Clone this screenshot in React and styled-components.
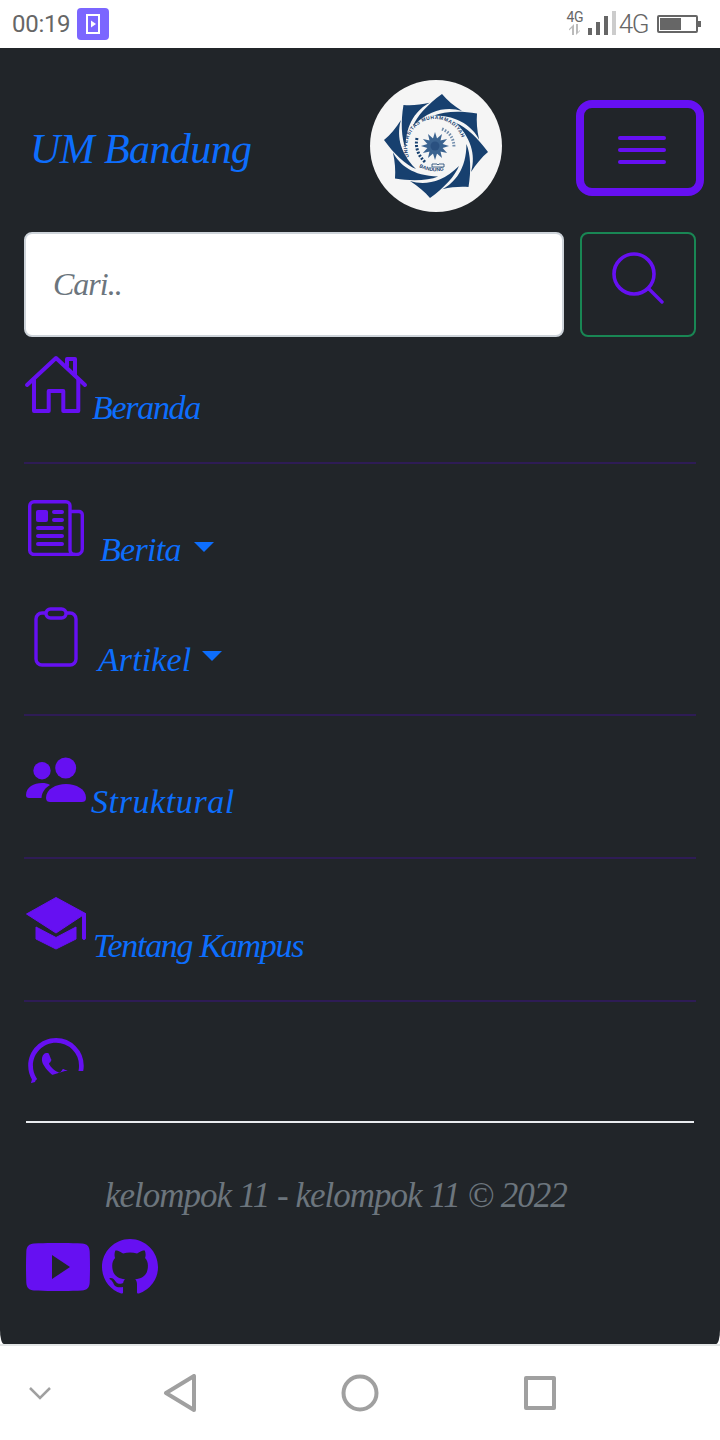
import styled, { createGlobalStyle } from "styled-components";
import { BsWhatsapp, BsGithub } from "react-icons/bs";

const GlobalStyle = createGlobalStyle`
  html, body { margin: 0; padding: 0; background: #fff; }
  * { box-sizing: border-box; }
`;

const script = `"Liberation Serif", "DejaVu Serif", serif`;
const purple = "#6610f2";
const blue = "#0d6efd";

const Screen = styled.div`
  width: 720px;
  height: 1440px;
  display: flex;
  flex-direction: column;
  overflow: hidden;
  background: #fff;
`;

/* status bar */
const StatusBar = styled.div`
  height: 48px;
  flex: none;
  display: flex;
  align-items: center;
  padding: 0 19px 0 12px;
  font-family: Roboto, sans-serif;
  color: #666;
`;
const Time = styled.span`
  font-size: 24px;
  letter-spacing: -0.3px;
`;
const AppBadge = styled.div`
  width: 32px;
  height: 32px;
  margin-left: 7px;
  border-radius: 4px;
  background: #7b66ff;
  display: flex;
  align-items: center;
  justify-content: center;
`;
const StatusRight = styled.div`
  margin-left: auto;
  display: flex;
  align-items: center;
`;
const SimStack = styled.div`
  width: 18px;
  display: flex;
  flex-direction: column;
  align-items: center;
  font-size: 14px;
  line-height: 13px;
  letter-spacing: -0.5px;
  margin-top: -2px;
`;
const BigG = styled.span`
  font-size: 26px;
  line-height: 26px;
  font-weight: 300;
  letter-spacing: -1.5px;
  margin: 0 9px 0 2px;
`;

/* main panel */
const Main = styled.main`
  flex: none;
  height: 1296px;
  background: #212529;
  border-radius: 0 0 4px 4px / 0 0 14px 14px;
  padding-top: 32px;
  font-family: ${script};
  font-style: italic;
`;
const Header = styled.header`
  display: flex;
  align-items: center;
  justify-content: space-between;
  padding: 0 16px 0 30px;
`;
const Brand = styled.a`
  color: ${blue};
  font-size: 42px;
  letter-spacing: -0.6px;
  line-height: 54px;
  width: 340px;
  margin-top: 6px;
`;
const Logo = styled.svg`
  display: block;
  width: 132px;
  height: 132px;
`;
const Toggler = styled.button`
  width: 128px;
  height: 96px;
  margin-left: 74px;
  margin-top: 4px;
  padding: 4px 0 0 4px;
  border: 8px solid ${purple};
  border-radius: 16px;
  background: none;
  display: flex;
  flex-direction: column;
  align-items: center;
  justify-content: center;
  gap: 8px;
`;
const TogglerBar = styled.span`
  display: block;
  width: 48px;
  height: 4px;
  border-radius: 2px;
  background: ${purple};
`;

/* search */
const SearchRow = styled.form`
  display: flex;
  gap: 16px;
  margin-top: 20px;
  padding: 0 24px;
`;
const SearchInput = styled.input`
  flex: 1;
  min-width: 0;
  height: 105px;
  padding: 0 27px;
  border: 2px solid #ced4da;
  border-radius: 8px;
  background: #fff;
  font-family: ${script};
  font-style: italic;
  font-size: 32px;
  letter-spacing: -1px;
  &::placeholder { color: #6c757d; opacity: 1; }
`;
const SearchButton = styled.button`
  width: 116px;
  height: 105px;
  padding: 0 0 13px;
  border: 2px solid #198754;
  border-radius: 8px;
  background: none;
  display: flex;
  align-items: center;
  justify-content: center;
`;

/* nav list */
const NavList = styled.nav`
  padding: 0 24px;
  color: ${purple};
`;
const NavRow = styled.div`
  display: flex;
  align-items: flex-end;
  height: ${p => p.$h}px;
  padding-left: ${p => p.$left || 0}px;
`;
const Spacer = styled.div`
  height: ${p => p.$h}px;
`;
const Divider = styled.div`
  height: 2px;
  background: #2e1c55;
`;
const NavLabel = styled.a`
  color: ${blue};
  font-size: 34px;
  line-height: 40px;
  letter-spacing: ${p => p.$track}px;
  margin-left: ${p => p.$gap}px;
  margin-bottom: ${p => p.$drop}px;
  white-space: nowrap;
`;
const Caret = styled.span`
  width: 0;
  height: 0;
  margin-left: ${p => p.$gap}px;
  margin-bottom: ${p => p.$drop}px;
  border-top: 10px solid ${blue};
  border-left: 10px solid transparent;
  border-right: 10px solid transparent;
`;
const ChatIcon = styled(BsWhatsapp)`
  clip-path: polygon(0 0, 100% 0, 100% 33px, 66% 33px, 14% 42px, 7px 44px, 0 46px);
`;

/* footer */
const FooterRule = styled.hr`
  height: 2px;
  margin: 0 26px;
  border: 0;
  background: #e9ecef;
`;
const Copy = styled.p`
  margin: 49px 0 0;
  padding-left: 105px;
  color: #6c757d;
  font-size: 35px;
  letter-spacing: -1px;
  line-height: 48px;
  white-space: nowrap;
`;
const Socials = styled.div`
  display: flex;
  align-items: center;
  gap: 12px;
  margin-top: 19px;
  padding-left: 26px;
  color: ${purple};
`;

/* android nav */
const SoftKeys = styled.div`
  flex: 1;
  display: grid;
  grid-template-columns: 80px 200px 160px 200px 80px;
  align-items: center;
  justify-items: center;
  border-top: 2px solid #e3e6e6;
`;

function SearchIcon() {
  return (
    <svg width="52" height="52" viewBox="0 0 52 52" fill="none" stroke={purple}>
      <circle cx="22" cy="22" r="20" strokeWidth="3.600" />
      <path d="M37 37 50 50" strokeWidth="3.400" strokeLinecap="round" />
    </svg>
  );
}

function HouseIcon() {
  return (
    <svg width="64" height="64" viewBox="0 0 64 64" fill="none" stroke={purple} strokeWidth="4" strokeLinecap="round" strokeLinejoin="round">
      <path d="M3 31 32 4l29 27" />
      <path d="M43 12V5h8v16" />
      <path d="M10 26v31h14.700V37h14.600v20h15V26" />
    </svg>
  );
}

function PaperIcon() {
  return (
    <svg width="56" height="56" viewBox="0 0 56 56" fill="none" stroke={purple} strokeWidth="3.400" strokeLinejoin="round">
      <path d="M6 1.700h32a4 4 0 0 1 4 4V50a4.500 4.500 0 0 0 4.500 4.500H6A4.300 4.300 0 0 1 1.700 50V6A4.300 4.300 0 0 1 6 1.700Z" />
      <path d="M42 11.500h9a3.300 3.300 0 0 1 3.300 3.300V49a5.500 5.500 0 0 1-5.500 5.500H46" />
      <rect x="8" y="10" width="12" height="12" rx="2" fill={purple} stroke="none" />
      <g strokeWidth="4" strokeLinecap="round">
        <path d="M26 12h8M26 20h8M10 28h24M10 36h24M10 44h24" />
      </g>
    </svg>
  );
}

function ClipIcon() {
  return (
    <svg width="44" height="60" viewBox="0 0 44 60" fill="none" stroke={purple} strokeWidth="3.400" strokeLinejoin="round">
      <rect x="2" y="6" width="40" height="52" rx="6" />
      <rect x="12" y="2" width="20" height="9" rx="4.500" fill="#212529" />
    </svg>
  );
}

function PeopleIcon() {
  return (
    <svg width="60" height="48" viewBox="0 0 60 48" fill={purple}>
      <circle cx="39.700" cy="12" r="10.500" />
      <circle cx="16" cy="14.700" r="8.700" />
      <path d="M20 42C20 33 30 28 40 28s20 5 20 14c0 3-2 4-4 4H24c-2 0-4-1-4-4Z" />
      <path d="M0 39c0-8 8-12 16-12 3 0 6 .5 8 2-5 3-8 7-8.500 13H3c-2 0-3-1-3-3Z" />
    </svg>
  );
}

function CapIcon() {
  return (
    <svg width="60" height="54" viewBox="0 0 60 54" fill={purple} stroke={purple} strokeWidth="1" strokeLinejoin="round">
      <path d="M.5 18 30 1.500 59.500 17.500 30 37Z" />
      <path d="M56.500 17.500h3V42a1.500 1.500 0 0 1-3 0Z" />
      <path d="M10 31l20 10.500L50 31v12L30 53 10 43Z" />
    </svg>
  );
}

function TubeIcon() {
  return (
    <svg width="64" height="48" viewBox="0 0 64 48">
      <path
        fill={purple}
        fillRule="evenodd"
        d="M8 0.500C22-.2 42-.2 56 .5c5 .3 7.500 3 7.700 8 .4 10 .4 21 0 31-.2 5-2.700 7.700-7.700 8-14 .7-34 .7-48 0-5-.3-7.500-3-7.700-8-.4-10-.4-21 0-31C.5 3.500 3 .8 8 .5ZM26 12v24l18-12Z"
      />
    </svg>
  );
}

function UmLogo() {
  const petals = [0, 45, 90, 135, 180, 225, 270, 315];
  const rays = Array.from({ length: 12 }, (_, i) => i * 30);
  return (
    <Logo viewBox="0 0 132 132">
      <circle cx="66" cy="66" r="66" fill="#f5f5f5" />
      <g transform="translate(66 66)" fill="#17406f">
        {petals.map(a => (
          <path key={a} transform={`rotate(${a})`} d="M-23-20C-19-30-8-42 6-52 11-46 18-40 26-35 13-39-5-38-23-20Z" />
        ))}
      </g>
      <defs>
        <path id="ringTop" d="M39 77A28 28 0 1 1 93 64" />
        <path id="ringBottom" d="M49 87Q66 96 84 86" />
      </defs>
      <text fontFamily="Liberation Sans, sans-serif" fontSize="5" fontWeight="700" fontStyle="normal" fill="#17406f" letterSpacing="0.5">
        <textPath href="#ringTop">UNIVERSITAS MUHAMMADIYAH</textPath>
      </text>
      <text fontFamily="Liberation Sans, sans-serif" fontSize="5" fontWeight="700" fontStyle="normal" fill="#17406f">
        <textPath href="#ringBottom">BANDUNG</textPath>
      </text>
      <g transform="translate(65 66)" fill="#3b6390">
        {rays.map(a => <path key={a} transform={`rotate(${a})`} d="M-2.500-6 0-14 2.500-6Z" />)}
        <circle r="7.500" />
        <circle r="4.500" fill="#2a5080" />
      </g>
      <path d="M47 58q-3 14 9 25" fill="none" stroke="#17406f" strokeWidth="3" strokeDasharray="2 1.500" />
      <path d="M72 49q12 5 12 19" fill="none" stroke="#6f8bab" strokeWidth="3" strokeDasharray="1.500 1.500" />
      <path d="M62 84h5l1 1 1-1h5v3H62Z" fill="none" stroke="#17406f" strokeWidth="0.800" />
    </Logo>
  );
}

export default function App() {
  return (
    <Screen>
      <GlobalStyle />
      <StatusBar>
        <Time>00:19</Time>
        <AppBadge>
          <svg width="14" height="20" viewBox="0 0 14 20">
            <rect x="1" y="1" width="12" height="18" fill="none" stroke="#fff" strokeWidth="2" />
            <path d="M5 6.500 10 10l-5 3.500Z" fill="#fff" />
          </svg>
        </AppBadge>
        <StatusRight>
          <SimStack>
            4G
            <svg width="14" height="11" viewBox="0 0 14 11" fill="#bbb">
              <path d="M6 0v11H4V4L1 6.500V5ZM8 0v11l4-4V6l-2 2V0Z" />
            </svg>
          </SimStack>
          <svg width="30" height="26" viewBox="0 0 30 26" fill="#666" style={{ marginLeft: 3 }}>
            <rect x="1" y="17" width="4" height="7" />
            <rect x="9" y="11" width="4" height="13" />
            <rect x="17" y="5" width="4" height="19" />
            <rect x="25" y="0" width="4" height="24" fill="#ccc" />
          </svg>
          <BigG>4G</BigG>
          <svg width="44" height="20" viewBox="0 0 44 20">
            <rect x="1" y="2" width="39" height="16" rx="1" fill="none" stroke="#666" strokeWidth="2" />
            <rect x="3" y="4" width="21" height="12" fill="#666" />
            <rect x="41" y="7" width="3" height="6" fill="#666" />
          </svg>
        </StatusRight>
      </StatusBar>

      <Main>
        <Header>
          <Brand>UM Bandung</Brand>
          <UmLogo />
          <Toggler aria-label="menu">
            <TogglerBar />
            <TogglerBar />
            <TogglerBar />
          </Toggler>
        </Header>

        <SearchRow>
          <SearchInput placeholder="Cari.." />
          <SearchButton type="button"><SearchIcon /></SearchButton>
        </SearchRow>

        <NavList>
          <NavRow $h={81}>
            <HouseIcon />
            <NavLabel $gap={4} $drop={-10} $track={-1.300}>Beranda</NavLabel>
          </NavRow>
          <Spacer $h={44} />
          <Divider />
          <NavRow $h={92} $left={4}>
            <PaperIcon />
            <NavLabel $gap={16} $drop={-14} $track={-0.700}>Berita</NavLabel>
            <Caret $gap={13} $drop={4} />
          </NavRow>
          <NavRow $h={111} $left={10}>
            <ClipIcon />
            <NavLabel $gap={20} $drop={-13} $track={0.100}>Artikel</NavLabel>
            <Caret $gap={11} $drop={6} />
          </NavRow>
          <Spacer $h={47} />
          <Divider />
          <NavRow $h={88} $left={2}>
            <PeopleIcon />
            <NavLabel $gap={5} $drop={-18} $track={0.600}>Struktural</NavLabel>
          </NavRow>
          <Spacer $h={53} />
          <Divider />
          <NavRow $h={91} $left={2}>
            <CapIcon />
            <NavLabel $gap={7} $drop={-16} $track={-1.300}>Tentang Kampus</NavLabel>
          </NavRow>
          <Spacer $h={50} />
          <Divider />
          <NavRow $h={92} $left={4}>
            <ChatIcon size={56} />
          </NavRow>
        </NavList>

        <Spacer $h={27} />
        <FooterRule />
        <Copy>kelompok 11 - kelompok 11 © 2022</Copy>
        <Socials>
          <TubeIcon />
          <BsGithub size={56} />
        </Socials>
      </Main>

      <SoftKeys>
        <svg width="24" height="14" viewBox="0 0 24 14" fill="none" stroke="#a0a0a0" strokeWidth="2.500">
          <path d="M2 2l10 10L22 2" />
        </svg>
        <svg width="34" height="38" viewBox="0 0 34 38" fill="none" stroke="#a0a0a0" strokeWidth="4" strokeLinejoin="round">
          <path d="M31 2v34L3 19Z" />
        </svg>
        <svg width="38" height="38" viewBox="0 0 38 38" fill="none" stroke="#a0a0a0" strokeWidth="4">
          <circle cx="19" cy="19" r="16.500" />
        </svg>
        <svg width="32" height="34" viewBox="0 0 32 34" fill="none" stroke="#a0a0a0" strokeWidth="4" strokeLinejoin="round">
          <rect x="2" y="2" width="28" height="30" />
        </svg>
        <span />
      </SoftKeys>
    </Screen>
  );
}
